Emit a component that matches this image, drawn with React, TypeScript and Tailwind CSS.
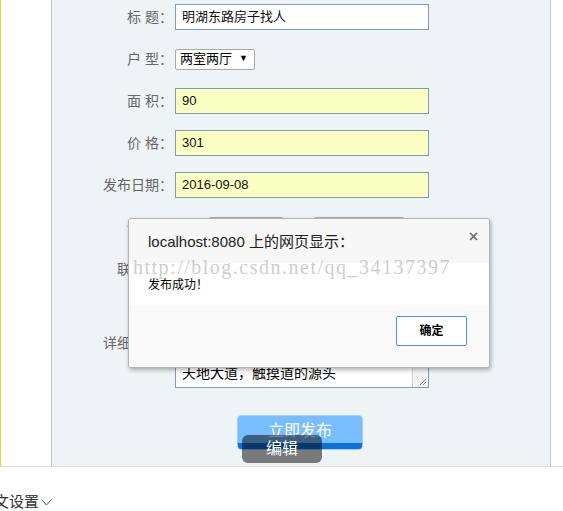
import React from "react";

const font = "font-['Liberation_Sans','Noto_Sans_CJK_SC',sans-serif]";

function Label({ text }: { text: string }) {
  return (
    <div className="w-[121px] shrink-0 text-right text-[14px] leading-none text-[#666]">
      {text}
    </div>
  );
}

function TextInput({ value, yellow }: { value: string; yellow?: boolean }) {
  return (
    <div
      className={`ml-[2px] flex h-[26px] w-[254px] items-center border border-[#7f9db9] px-[6px] text-[13px] text-[#111] ${
        yellow ? "bg-[#fbffc2]" : "bg-white"
      }`}
    >
      {value}
    </div>
  );
}

function Row({ label, children }: { label: string; children: React.ReactNode }) {
  return (
    <div className="flex h-[26px] items-center">
      <Label text={label} />
      {children}
    </div>
  );
}

export default function App() {
  return (
    <div className={`relative h-[511px] w-[563px] overflow-hidden bg-white ${font}`}>
      {/* page body */}
      <div className="flex h-[467px] border-b border-[#dedede]">
        <div className="w-[52px] shrink-0 border-l border-r border-l-[#f7c948] border-r-[#c4c4c4] bg-white" />
        <div className="w-[499px] shrink-0 border-r border-[#c8c8c8] bg-[#eef3f6] pt-[4px]">
          <div className="flex flex-col gap-4">
            <Row label="标 题：">
              <TextInput value="明湖东路房子找人" />
            </Row>
            <Row label="户 型：">
              <div className="ml-[2px] flex h-[21px] w-[80px] items-center justify-between rounded-[2px] border border-[#a9a9a9] bg-white pl-[4px] pr-[6px] text-[13px] text-black">
                <span>两室两厅</span>
                <span className="text-[9px]">▼</span>
              </div>
            </Row>
            <Row label="面 积：">
              <TextInput value="90" yellow />
            </Row>
            <Row label="价 格：">
              <TextInput value="301" yellow />
            </Row>
            <Row label="发布日期：">
              <TextInput value="2016-09-08" yellow />
            </Row>
            <Row label="位 置：">
              <div className="ml-[35px] flex gap-[29px]">
                <div className="h-[20px] w-[76px] rounded-[3px] border border-[#aaa] bg-white" />
                <div className="h-[20px] w-[92px] rounded-[3px] border border-[#aaa] bg-white" />
              </div>
            </Row>
            <Row label="联系人：">
              <TextInput value="" />
            </Row>
            <div className="flex h-[90px] items-center">
              <Label text="详细描述：" />
              <div className="ml-[2px] flex h-[90px] w-[254px] border border-[#7f9db9] bg-white">
                <div className="flex flex-1 flex-col justify-end px-[6px] pb-[5px] text-[14px] leading-[18px] text-black">
                  <span>天地大道，触摸道的源头</span>
                </div>
                <div className="relative w-[16px] border-l border-[#d0d0d0] bg-[#f4f4f4]">
                  <svg className="absolute bottom-[1px] right-[1px]" width="10" height="10" viewBox="0 0 10 10">
                    <path d="M9 3 L3 9 M9 6 L6 9" stroke="#888" strokeWidth="1" />
                  </svg>
                </div>
              </div>
            </div>
          </div>
          <div className="mt-[27px] ml-[185px] flex h-[35px] w-[126px] flex-col overflow-hidden rounded-[4px] border border-[#a8ccff]">
            <div className="flex flex-1 items-center justify-center bg-[#78bdff] pt-[3px] text-[16px] text-white">
              立即发布
            </div>
            <div className="h-[7px] bg-[#0b72d6]" />
          </div>
        </div>
        <div className="flex-1 bg-white" />
      </div>

      {/* footer link */}
      <div className="-ml-[21px] mt-[24px] flex items-center gap-[2px] text-[15px] text-[#333]">
        <span>中文设置</span>
        <svg width="11" height="7" viewBox="0 0 11 7">
          <path d="M0.5 0.5 L5.5 6 L10.5 0.5" fill="none" stroke="#555" strokeWidth="1" />
        </svg>
      </div>

      {/* hover tip over the submit button */}
      <div className="absolute left-[242px] top-[435px] flex h-[28px] w-[80px] items-center justify-center rounded-[6px] bg-black/50 text-[16px] text-white">
        编辑
      </div>

      {/* alert dialog */}
      <div className="absolute left-[128px] top-[218px] flex h-[150px] w-[362px] flex-col overflow-hidden rounded-[3px] border border-[#b4b4b4] bg-[#f9f9f9] shadow-[1px_2px_4px_rgba(0,0,0,0.3)]">
        <div className="relative h-[44px] shrink-0 bg-[#f7f7f7] pl-[19px] pt-[12px] text-[15px] text-[#222]">
          localhost:8080 上的网页显示：
          <span className="absolute right-[11px] top-[6px] text-[16px] font-bold text-[#777]">×</span>
        </div>
        <div className="flex h-[43px] shrink-0 items-center bg-white pl-[19px] text-[12px] text-black">
          发布成功！
        </div>
        <div className="flex flex-1 justify-end bg-[#f9f9f9] pr-[22px] pt-[10px]">
          <div className="flex h-[30px] w-[71px] items-center justify-center rounded-[2px] border border-[#4d8ff5] bg-white text-[12px] font-bold text-black">
            确定
          </div>
        </div>
      </div>

      {/* blog watermark */}
      <div className="pointer-events-none absolute left-[133px] top-[252px] font-['Liberation_Serif',serif] text-[20px] tracking-[1.5px] text-[#bdbdbd]/75">
        http://blog.csdn.net/qq_34137397
      </div>
    </div>
  );
}
